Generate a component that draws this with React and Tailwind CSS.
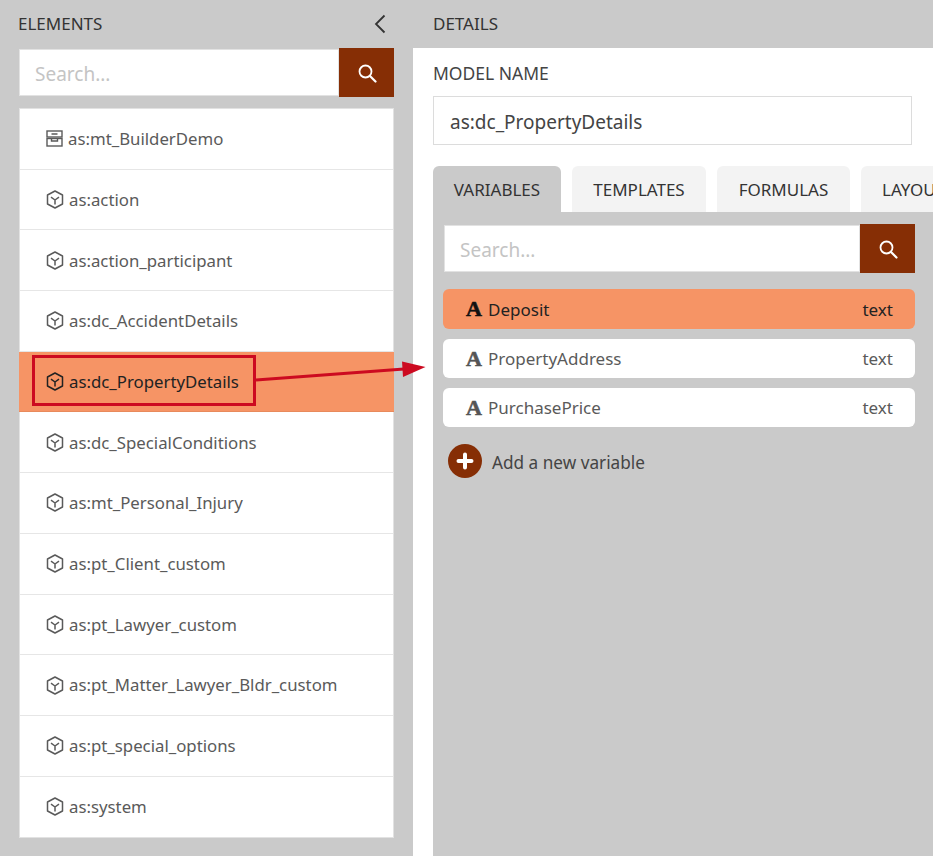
import React from "react";

const elements = [
  "as:action",
  "as:action_participant",
  "as:dc_AccidentDetails",
  "as:dc_PropertyDetails",
  "as:dc_SpecialConditions",
  "as:mt_Personal_Injury",
  "as:pt_Client_custom",
  "as:pt_Lawyer_custom",
  "as:pt_Matter_Lawyer_Bldr_custom",
  "as:pt_special_options",
  "as:system",
];

const variables = [
  { name: "Deposit", active: true },
  { name: "PropertyAddress" },
  { name: "PurchasePrice" },
];

function SearchIcon() {
  return (
    <svg width="20" height="20" viewBox="0 0 20 20" fill="none" stroke="white" strokeWidth="1.8">
      <circle cx="8.5" cy="8.5" r="6" />
      <path d="M13 13 L18.5 18.5" strokeLinecap="round" strokeWidth="2.2" />
    </svg>
  );
}

function CubeIcon() {
  return (
    <svg width="18" height="19" viewBox="0 0 18 19" fill="none" stroke="currentColor" strokeWidth="1.5" strokeLinejoin="round">
      <path d="M9 1 L16.5 5 V14 L9 18 L1.5 14 V5 Z" />
      <path d="M5 7.2 L9 10 L13 7.2 M9 10 V14.5" />
    </svg>
  );
}

function ModelIcon() {
  return (
    <svg width="17" height="17" viewBox="0 0 17 17" fill="none" stroke="currentColor" strokeWidth="1.4">
      <rect x="1" y="1" width="15" height="6" />
      <rect x="1" y="8.5" width="15" height="7.5" />
      <path d="M5.5 4 H11.5 M5.5 8.5 V11 H11.5 V8.5" />
    </svg>
  );
}

function SearchBox({ className = "" }) {
  return (
    <div className={`flex h-[49px] ${className}`}>
      <div className="flex-1 bg-white border border-[#e2e2e2] my-px flex items-center pl-[15px] pt-[4px] text-[19px] text-[#c4c4c4]">Search...</div>
      <div className="w-[55px] bg-[#862e05] flex items-center justify-center">
        <SearchIcon />
      </div>
    </div>
  );
}

export default function App() {
  return (
    <div className="relative w-[933px] h-[856px] overflow-hidden bg-[#cacaca] flex text-[#5a5a5a] font-['Noto_Sans',sans-serif]">
      <div className="w-[413px] shrink-0 pl-[19px] pr-[19px]">
        <div className="h-[48px] flex items-center justify-between text-[17px] text-[#333] -ml-px">
          <span>ELEMENTS</span>
          <svg width="12" height="20" viewBox="0 0 12 20" fill="none" stroke="#333" strokeWidth="1.8" className="mr-[8px]">
            <path d="M10.5 1.5 L2 10 L10.5 18.5" />
          </svg>
        </div>
        <SearchBox />
        <div className="mt-[11px] bg-white border border-[#e2e2e2] text-[16.8px]">
          <div className="h-[60.7px] border-b border-[#e6e6e6] flex items-center gap-[5px] pl-[26px]">
            <ModelIcon />
            <span>as:mt_BuilderDemo</span>
          </div>
          {elements.map((name, i) => {
            const active = name === "as:dc_PropertyDetails";
            return (
              <div
                key={name}
                className={`h-[60.7px] flex items-center gap-[5px] ${i < elements.length - 1 ? "border-b border-[#e6e6e6]" : ""} ${active ? "bg-[#f69465] text-[#222] -mx-px pl-[27px] border-b-[#e88a5c]" : "pl-[26px]"}`}
              >
                <CubeIcon />
                <span>{name}</span>
              </div>
            );
          })}
        </div>
      </div>

      <div className="flex-1 min-w-0">
        <div className="h-[48px] flex items-center pl-[20px] text-[17px] text-[#333]">DETAILS</div>
        <div className="h-[808px] bg-white pl-[20px] flex flex-col">
          <div className="h-[48px] flex items-center pt-[2px] text-[17.5px] text-[#444]">MODEL NAME</div>
          <div className="w-[479px] h-[49px] border border-[#dcdcdc] flex items-center pl-4 pt-[3px] text-[19px] text-[#444]">as:dc_PropertyDetails</div>
          <div className="mt-[21px] flex gap-[11px] h-[46px] text-[17px] text-[#333] whitespace-nowrap">
            <div className="w-[128px] shrink-0 bg-[#cacaca] rounded-t-md flex items-center justify-center pt-[2px]">VARIABLES</div>
            <div className="w-[134px] shrink-0 bg-[#f3f3f3] rounded-t-md flex items-center justify-center pt-[2px]">TEMPLATES</div>
            <div className="w-[133px] shrink-0 bg-[#f3f3f3] rounded-t-md flex items-center justify-center pt-[2px]">FORMULAS</div>
            <div className="w-[133px] shrink-0 bg-[#f3f3f3] rounded-t-md flex items-center pl-[21px] pt-[2px]">LAYOUT</div>
          </div>
          <div className="flex-1 bg-[#cacaca] pt-[12px] pl-[10px] pr-[18px]">
            <SearchBox className="ml-px" />
            <div className="mt-[16px] flex flex-col gap-[10px] text-[17px]">
              {variables.map((v) => (
                <div
                  key={v.name}
                  className={`flex items-center rounded-md pl-[23px] pr-[22px] ${v.active ? "h-[40px] bg-[#f69465] text-[#222]" : "h-[39px] bg-white"}`}
                >
                  <span className={`w-[22px] font-['Liberation_Serif',serif] font-bold text-[22px] leading-none [-webkit-text-stroke:0.6px_currentColor] ${v.active ? "text-[#111]" : "text-[#555]"}`}>A</span>
                  <span className="flex-1 pt-px">{v.name}</span>
                  <span className="pt-px">text</span>
                </div>
              ))}
            </div>
            <div className="mt-[17px] ml-[5px] flex items-center gap-[10px] text-[17.2px] text-[#444]">
              <div className="w-[34px] h-[34px] rounded-full bg-[#862e05] flex items-center justify-center">
                <svg width="18" height="18" viewBox="0 0 18 18" stroke="white" strokeWidth="4" strokeLinecap="round">
                  <path d="M9 2.5 V15.5 M2.5 9 H15.5" />
                </svg>
              </div>
              <span className="pt-[3px]">Add a new variable</span>
            </div>
          </div>
        </div>
      </div>

      {/* annotation over the screenshot */}
      <div className="absolute left-[32px] top-[355px] w-[224px] h-[51px] border-[3px] border-[#cc0a20]" />
      <svg className="absolute left-0 top-0" width="933" height="856" fill="none">
        <path d="M256 380 L404 369" stroke="#cc0a20" strokeWidth="3" />
        <path d="M402 361.5 L425.5 367 L403 377 Z" fill="#cc0a20" />
      </svg>
    </div>
  );
}
